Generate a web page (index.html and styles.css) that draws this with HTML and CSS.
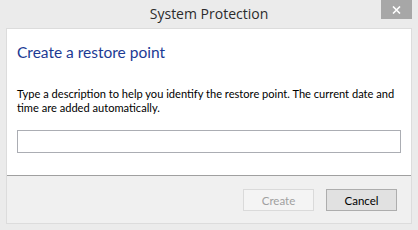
FILE: index.html
```html
<!DOCTYPE html>
<html lang="en">
<head>
  <meta charset="UTF-8">
  <title>System Protection</title>
  <link rel="stylesheet" href="styles.css">
</head>
<body>

<div class="titlebar">
  <span class="title">System Protection</span>
  <span class="close">
    <svg width="9" height="8" viewBox="0 0 9 8">
      <path d="M1 0.5 L8 7.5 M8 0.5 L1 7.5" stroke="#fff" stroke-width="1.6"/>
    </svg>
  </span>
</div>

<div class="dialog">
  <div class="content">
    <h1>Create a restore point</h1>
    <p>Type a description to help you identify the restore point. The current date and<br>time are added automatically.</p>
    <input type="text" class="desc">
  </div>
  <div class="footer">
    <button disabled>Create</button>
    <button>Cancel</button>
  </div>
</div>

</body>
</html>
```

FILE: styles.css
```css
body {
  margin: 0;
  background-color: #ebebeb;
  font-family: Lato, "Open Sans", sans-serif;
  width: 418px;
  height: 230px;
  overflow: hidden;
}

.titlebar {
  position: relative;
  height: 28px;
  display: flex;
  align-items: center;
  justify-content: center;
}

.title {
  font-family: "Open Sans", sans-serif;
  font-size: 14px;
  color: #2b2b2b;
  margin-top: -1px;
}

.close {
  position: absolute;
  top: 0;
  right: 6px;
  width: 31px;
  height: 19px;
  background-color: #a7a7a7;
  display: flex;
  align-items: center;
  justify-content: center;
}

.dialog {
  margin: 0 6px;
  border: 1px solid #dcdcdc;
  border-top: none;
}

.content {
  background-color: #fff;
  height: 148px;
  padding: 0 10px;
  border-top: 1px solid #dcdcdc;
  border-bottom: 1px solid #a0a0a0;
  box-sizing: border-box;
}

h1 {
  margin: 0;
  padding-top: 13px;
  font-size: 15.5px;
  line-height: 20px;
  font-weight: normal;
  color: #1c3a94;
}

p {
  margin: 25px 0 0 0;
  font-size: 11.1px;
  line-height: 14px;
  color: #000;
  white-space: nowrap;
}

.desc {
  display: block;
  margin-top: 15px;
  width: 384px;
  height: 23px;
  box-sizing: border-box;
  border: 1px solid #abadb3;
  padding: 0 4px;
}

.footer {
  background-color: #f0f0f0;
  height: 47px;
  display: flex;
  justify-content: flex-end;
  align-items: flex-start;
  gap: 12px;
  padding: 13px 14px 0 0;
  box-sizing: border-box;
}

button {
  width: 71px;
  height: 22px;
  font-family: inherit;
  font-size: 11.5px;
  color: #000;
  background-color: #e1e1e1;
  border: 1px solid #adadad;
  padding: 0;
}

button:disabled {
  color: #a0a0a0;
  background-color: #f4f4f4;
  border-color: #dadada;
}
```
